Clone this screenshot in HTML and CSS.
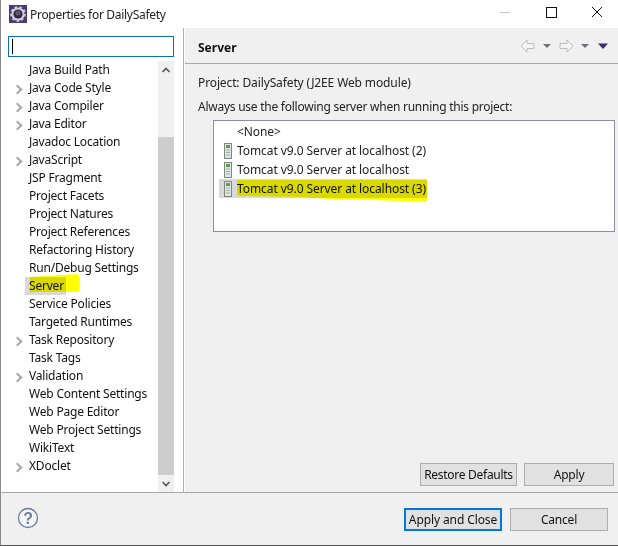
FILE: index.html
```html
<!DOCTYPE html>
<html lang="en">
<head>
<meta charset="utf-8">
<title>Properties for DailySafety</title>
<link rel="stylesheet" href="styles.css">
</head>
<body>
<div class="window">
  <header class="titlebar">
    <svg class="app-icon" width="18" height="18" viewBox="0 0 18 18"><rect x="0" y="0" width="18" height="18" fill="#4b3a78"/><circle cx="9" cy="9" r="6.6" fill="#d5d5da"/><circle cx="9" cy="9" r="6.6" fill="none" stroke="#c9c9d0" stroke-width="2.6" stroke-dasharray="2.4 2.2"/><circle cx="9" cy="9" r="4.6" fill="#2f2b45"/><circle cx="9" cy="8" r="2.6" fill="#5a5670"/></svg>
    <span class="title">Properties for DailySafety</span>
    <div class="winbtns">
      <svg width="46" height="28" viewBox="0 0 46 28"><path d="M18 12.5h10" stroke="#c8c8c8"/></svg>
      <svg width="46" height="28" viewBox="0 0 46 28"><rect x="18.500" y="7.500" width="10" height="10" fill="none" stroke="#111"/></svg>
      <svg width="46" height="28" viewBox="0 0 46 28"><path d="M18 7l10 10M28 7L18 17" stroke="#111" fill="none"/></svg>
    </div>
  </header>
  <div class="main">
    <aside class="sidebar">
      <div class="search"><span class="caret"></span></div>
      <div class="tree-wrap">
        <ul class="tree">
          <li class="node">Java Build Path</li>
          <li class="node has-kids">Java Code Style</li>
          <li class="node has-kids">Java Compiler</li>
          <li class="node has-kids">Java Editor</li>
          <li class="node">Javadoc Location</li>
          <li class="node has-kids">JavaScript</li>
          <li class="node">JSP Fragment</li>
          <li class="node">Project Facets</li>
          <li class="node">Project Natures</li>
          <li class="node">Project References</li>
          <li class="node">Refactoring History</li>
          <li class="node">Run/Debug Settings</li>
          <li class="node"><span class="sel">Server</span></li>
          <li class="node">Service Policies</li>
          <li class="node">Targeted Runtimes</li>
          <li class="node has-kids">Task Repository</li>
          <li class="node">Task Tags</li>
          <li class="node has-kids">Validation</li>
          <li class="node">Web Content Settings</li>
          <li class="node">Web Page Editor</li>
          <li class="node">Web Project Settings</li>
          <li class="node">WikiText</li>
          <li class="node has-kids">XDoclet</li>
        </ul>
        <div class="scrollbar">
          <svg class="arrow" width="16" height="18" viewBox="0 0 16 18"><path d="M4.500 11L8 7.500l3.500 3.500" fill="none" stroke="#555" stroke-width="1.600"/></svg>
          <div class="track"><div class="thumb"></div></div>
          <svg class="arrow" width="16" height="17" viewBox="0 0 16 17"><path d="M4.500 7L8 10.500 11.500 7" fill="none" stroke="#555" stroke-width="1.600"/></svg>
        </div>
      </div>
    </aside>
    <section class="page">
      <div class="page-head">
        <h1 class="page-title">Server</h1>
        <div class="nav">
          <svg width="16" height="14" viewBox="0 0 16 14"><path d="M1 7l6-6v3.500h7v5H7V13z" fill="#f4f4f4" stroke="#bdbdbd"/></svg>
          <svg width="12" height="14" viewBox="0 0 12 14"><path d="M2 5h8L6 9z" fill="#6f6f78"/></svg>
          <svg width="16" height="14" viewBox="0 0 16 14"><path d="M15 7L9 1v3.500H2v5h7V13z" fill="#f4f4f4" stroke="#bdbdbd"/></svg>
          <svg width="12" height="14" viewBox="0 0 12 14"><path d="M2 5h8L6 9z" fill="#6f6f78"/></svg>
          <svg width="14" height="14" viewBox="0 0 14 14"><path d="M2 4.500h10L7 10z" fill="#3f2a6e"/></svg>
        </div>
      </div>
      <div class="page-body">
        <p class="line project">Project: DailySafety (J2EE Web module)</p>
        <p class="line always">Always use the following server when running this project:</p>
        <div class="listbox">
          <div class="row"><span class="none">&lt;None&gt;</span></div>
          <div class="row">
            <svg class="srv" width="10" height="16" viewBox="0 0 10 16"><rect x="1.500" y=".5" width="7" height="15" fill="#dfe4e4" stroke="#7d8a78"/><rect x="3" y="2" width="4" height="3" fill="#5f9a4f"/><path d="M3 7h4M3 9.500h4M3 12h4" stroke="#a5aeb4"/></svg>
            <span>Tomcat v9.0 Server at localhost (2)</span>
          </div>
          <div class="row">
            <svg class="srv" width="10" height="16" viewBox="0 0 10 16"><rect x="1.500" y=".5" width="7" height="15" fill="#dfe4e4" stroke="#7d8a78"/><rect x="3" y="2" width="4" height="3" fill="#5f9a4f"/><path d="M3 7h4M3 9.500h4M3 12h4" stroke="#a5aeb4"/></svg>
            <span>Tomcat v9.0 Server at localhost</span>
          </div>
          <div class="row selected">
            <svg class="srv" width="10" height="16" viewBox="0 0 10 16"><rect x="1.500" y=".5" width="7" height="15" fill="#dfe4e4" stroke="#7d8a78"/><rect x="3" y="2" width="4" height="3" fill="#5f9a4f"/><path d="M3 7h4M3 9.500h4M3 12h4" stroke="#a5aeb4"/></svg>
            <span>Tomcat v9.0 Server at localhost (3)</span>
          </div>
        </div>
        <div class="page-actions">
          <button class="btn restore">Restore Defaults</button>
          <button class="btn apply">Apply</button>
        </div>
      </div>
    </section>
  </div>
  <footer class="footer">
    <svg class="help" width="22" height="22" viewBox="0 0 22 22"><circle cx="11" cy="11" r="9.500" fill="#f4f5f8" stroke="#6b7c9c" stroke-width="1.300"/><text x="11" y="16.500" text-anchor="middle" class="help-q">?</text></svg>
    <div class="footer-btns">
      <button class="btn primary">Apply and Close</button>
      <button class="btn cancel">Cancel</button>
    </div>
  </footer>
  <svg class="marker" width="618" height="546" viewBox="0 0 618 546">
    <path d="M30 277l48-3 2 4-1 14H30z" fill="#ffff00"/>
    <path d="M237 180h190v19l-1 3-25-1-30-1-40-1-32-2-62-1z" fill="#ffff00"/>
  </svg>
</div>
</body>
</html>
```
FILE: styles.css
```css
* { box-sizing: border-box; }
html, body { margin: 0; padding: 0; }
body { background: #fff; font-family: "Noto Sans", "Open Sans", sans-serif; font-size: 12px; letter-spacing: -0.2px; color: #111; }
.window { position: relative; width: 618px; height: 546px; display: flex; flex-direction: column; border-left: 1px solid #8a8a8a; border-bottom: 1px solid #555; overflow: hidden; }
.titlebar { height: 28px; flex: none; display: flex; align-items: center; padding-left: 8px; background: #fff; }
.app-icon { flex: none; }
.title { margin-left: 3px; color: #222; letter-spacing: -0.3px; }
.winbtns { margin-left: auto; display: flex; margin-right: -2px; }
.winbtns svg { display: block; }
.main { flex: 1; display: flex; min-height: 0; border-bottom: 1px solid #a8a8a8; }
.sidebar { width: 183px; flex: none; background: #fff; padding: 8px 0 0 7px; border-right: 1px solid #b0b0b0; display: flex; flex-direction: column; }
.search { width: 166px; height: 21px; flex: none; border: 1px solid #0b6fc2; display: flex; align-items: center; padding-left: 3px; }
.caret { width: 1px; height: 15px; background: #000; }
.tree-wrap { flex: 1; display: flex; min-height: 0; margin-top: 4px; }
.tree { list-style: none; margin: 0; padding: 0; width: 150px; }
.node { position: relative; height: 18px; line-height: 18px; padding-left: 21px; white-space: nowrap; }
.has-kids::before { content: ""; position: absolute; left: 6px; top: 7px; width: 5px; height: 5px; border-top: 2px solid #a8a8a8; border-right: 2px solid #a8a8a8; transform: rotate(45deg); }
.sel { display: inline-block; background: #d9d9d9; margin-left: -4px; padding: 0 4px; width: 41px; overflow: visible; }
.scrollbar { width: 16px; flex: none; background: #f0f0f0; display: flex; flex-direction: column; }
.arrow { flex: none; display: block; }
.track { flex: 1; padding-top: 58px; display: flex; }
.thumb { flex: 1; background: #cdcdcd; }
.page { flex: 1; min-width: 0; margin-left: 1px; background: #f0f0f0; display: flex; flex-direction: column; }
.page-head { height: 36px; flex: none; display: flex; align-items: center; justify-content: space-between; padding: 0 8px 0 13px; border-bottom: 1px solid #a8a8a8; }
.page-title { margin: 3px 0 0; font-size: 12px; font-weight: 700; color: #111; letter-spacing: 0; }
.nav { display: flex; align-items: center; gap: 5px; }
.nav svg { display: block; }
.page-body { flex: 1; display: flex; flex-direction: column; padding: 10px 4px 6px 13px; min-height: 0; }
.line { margin: 0; line-height: 18px; color: #222; }
.project { margin-bottom: 6px; letter-spacing: -0.12px; }
.always { letter-spacing: -0.25px; }
.listbox { margin: 4px 0 0 15px; width: 402px; height: 112px; background: #fff; border: 1px solid #8f8f9a; padding: 1px 5px; }
.row { height: 19px; width: fit-content; display: flex; align-items: center; gap: 4px; padding: 0 1px 0 4px; color: #222; white-space: nowrap; letter-spacing: -0.08px; }
.none { margin-left: 14px; }
.selected { background: #d9d9d9; color: #111; }
.srv { flex: none; }
.page-actions { margin-top: auto; display: flex; justify-content: flex-end; gap: 7px; }
.btn { height: 23px; padding: 0; background: #e1e1e1; border: 1px solid #adadad; font: inherit; letter-spacing: inherit; color: #111; }
.restore { width: 97px; letter-spacing: -0.28px; }
.apply { width: 90px; }
.footer { height: 52px; flex: none; background: #f0f0f0; display: flex; align-items: center; justify-content: space-between; padding: 0 10px 0 16px; }
.help { display: block; margin-top: -2px; }
.help-q { font-family: "Liberation Sans", sans-serif; font-size: 16px; font-weight: 700; fill: #6b7c9c; }
.footer-btns { display: flex; gap: 8px; }
.primary { width: 98px; border: 2px solid #0078d7; letter-spacing: -0.1px; }
.cancel { width: 98px; }
.marker { position: absolute; left: -1px; top: 0; mix-blend-mode: multiply; pointer-events: none; }
```
